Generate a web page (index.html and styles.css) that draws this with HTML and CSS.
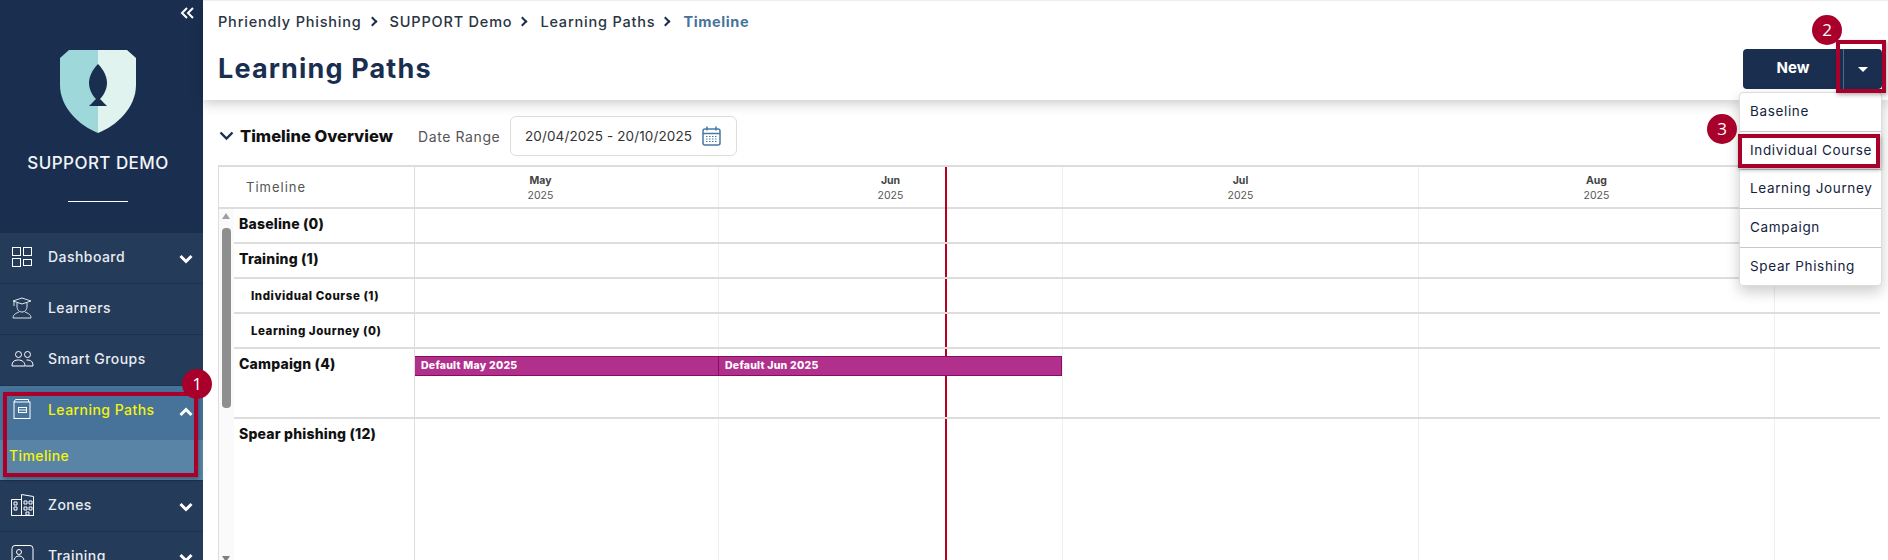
FILE: index.html
```html
<!DOCTYPE html>
<html lang="en">
<head>
<meta charset="utf-8">
<title>Learning Paths - Timeline</title>
<link rel="stylesheet" href="styles.css">
</head>
<body>
<div class="page">
  <aside class="sidebar">
    <div class="brand">
      <button class="collapse" aria-label="Collapse"><svg width="14" height="12" viewBox="0 0 14 12"><path d="M7 1 2 6l5 5M13 1 8 6l5 5" fill="none" stroke="#fff" stroke-width="2"/></svg></button>
      <svg class="shield" width="76" height="83" viewBox="0 0 76 83">
        <path d="M9 0H38V83C20 76 0 58 0 35V8Z" fill="#9fd8da"/>
        <path d="M38 0H67L76 8V35C76 58 56 76 38 83Z" fill="#e0f3ee"/>
        <path d="M38 14C32 20 29 27 29 33C29 40 33 46 36 49C33 52 31 54 29 56H47C45 54 43 52 40 49C43 46 47 40 47 33C47 27 44 20 38 14Z" fill="#1a2f50"/>
      </svg>
      <div class="brand-name">SUPPORT DEMO</div>
      <div class="brand-rule"></div>
    </div>
    <nav class="nav">
      <div class="nav-item">
        <svg class="nav-icon" width="20" height="20" viewBox="0 0 20 20" fill="none" stroke="#fff"><rect x=".5" y=".5" width="8" height="8"/><rect x="11.5" y=".5" width="8" height="8"/><rect x=".5" y="11.5" width="8" height="8"/><rect x="11.5" y="12.5" width="8" height="6"/></svg>
        <span class="nav-label">Dashboard</span>
        <svg class="nav-chev" width="14" height="10" viewBox="0 0 14 10"><path d="M1.500 2 7 7.500 12.500 2" fill="none" stroke="#fff" stroke-width="3"/></svg>
      </div>
      <div class="nav-item">
        <svg class="nav-icon" width="20" height="22" viewBox="0 0 20 22" fill="none" stroke="#dfe5ec"><path d="M1 4 10 1l9 3-9 3ZM5 6v3c0 4 2 6 5 6s5-2 5-6V6M2 4v5M1 21c0-4 4-5 6-6M19 21c0-4-4-5-6-6M1 21h18"/></svg>
        <span class="nav-label">Learners</span>
      </div>
      <div class="nav-item">
        <svg class="nav-icon wide" width="22" height="16" viewBox="0 0 22 16" fill="none" stroke="#fff"><circle cx="7" cy="3.500" r="3"/><circle cx="16" cy="3.500" r="3"/><path d="M.5 15c0-5 3-6 6.500-6s6.500 2 6.500 6ZM15 9c4 0 6.500 1 6.500 6H14"/></svg>
        <span class="nav-label">Smart Groups</span>
      </div>
      <div class="nav-group">
        <div class="nav-item active">
          <svg class="nav-icon" width="18" height="20" viewBox="0 0 18 20" fill="none" stroke="#fff" stroke-width="1"><path d="M2.500 .5H15.500V3"/><path d="M2.500 .5 1 3"/><rect x="1" y="3" width="16" height="16.500"/><rect x="5.500" y="8.500" width="8" height="5"/><path d="M5.500 11H13.500"/></svg>
          <span class="nav-label">Learning Paths</span>
          <svg class="nav-chev" width="14" height="10" viewBox="0 0 14 10"><path d="M1.500 8 7 2.500 12.500 8" fill="none" stroke="#fff" stroke-width="3"/></svg>
        </div>
        <div class="nav-sub">Timeline</div>
      </div>
      <div class="nav-item">
        <svg class="nav-icon wide" width="23" height="22" viewBox="0 0 23 22" fill="none" stroke="#fff"><path d="M.5 21.500V5.500h10V21.500ZM10.500 21.500V.5l12 2V21.500ZM.5 21.500h22M3 8h3v3H3ZM3 13h3v3H3ZM13 7h3v3h-3ZM18 7h3v3h-3ZM13 13h3v3h-3ZM18 13h3v3h-3ZM15 21v-3h3v3Z"/></svg>
        <span class="nav-label">Zones</span>
        <svg class="nav-chev" width="14" height="10" viewBox="0 0 14 10"><path d="M1.500 2 7 7.500 12.500 2" fill="none" stroke="#fff" stroke-width="3"/></svg>
      </div>
      <div class="nav-item">
        <svg class="nav-icon wide" width="23" height="22" viewBox="0 0 23 22" fill="none" stroke="#fff"><rect x="1" y=".5" width="21" height="18" rx="3"/><circle cx="8" cy="7" r="2.500"/><path d="M3 16c0-3 2-5 5-5s5 2 5 5"/></svg>
        <span class="nav-label">Training</span>
        <svg class="nav-chev" width="14" height="10" viewBox="0 0 14 10"><path d="M1.500 2 7 7.500 12.500 2" fill="none" stroke="#fff" stroke-width="3"/></svg>
      </div>
    </nav>
  </aside>

  <main class="main">
    <header class="topbar">
      <div class="crumbs">
        <span>Phriendly Phishing</span><i class="sep"></i>
        <span>SUPPORT Demo</span><i class="sep"></i>
        <span>Learning Paths</span><i class="sep"></i>
        <span class="crumb-current">Timeline</span>
      </div>
      <div class="title-row">
        <h1 class="title">Learning Paths</h1>
        <div class="split">
          <button class="btn-new">New</button>
          <button class="btn-caret" aria-label="More"><i class="caret"></i></button>
          <ul class="menu">
            <li>Baseline</li>
            <li>Individual Course</li>
            <li>Learning Journey</li>
            <li>Campaign</li>
            <li>Spear Phishing</li>
          </ul>
        </div>
      </div>
    </header>

    <section class="content">
      <div class="toolbar">
        <svg class="tool-chev" width="15" height="10" viewBox="0 0 15 10"><path d="M1.500 1.500 7.500 7.500 13.500 1.500" fill="none" stroke="#1a2f50" stroke-width="2.400"/></svg>
        <h2 class="tool-title">Timeline Overview</h2>
        <span class="range-label">Date Range</span>
        <div class="range-input">
          <span>20/04/2025 - 20/10/2025</span>
          <svg width="19" height="20" viewBox="0 0 19 20" fill="none" stroke="#4a7aa0"><rect x="1" y="3" width="17" height="16" rx="2" stroke-width="1.500"/><path d="M1 7.500h17M5 .5v4M14 .5v4" stroke-width="1.500"/><path d="M4 10.500h11M4 13h11M4 15.500h11" stroke-dasharray="1.500 1.500" stroke-width="1.200"/></svg>
        </div>
      </div>

      <div class="timeline">
        <div class="today"></div>
        <div class="tl-row tl-head">
          <div class="head-label">Timeline</div>
          <div class="month month-first"><b>May</b><span>2025</span></div>
          <div class="month"><b>Jun</b><span>2025</span></div>
          <div class="month"><b>Jul</b><span>2025</span></div>
          <div class="month"><b>Aug</b><span>2025</span></div>
          <div class="month"></div>
        </div>
        <div class="tl-body">
          <div class="scrollbar"><i class="arrow-up"></i><i class="thumb"></i><i class="arrow-down"></i></div>
          <div class="tl-rows">
            <div class="tl-row r35"><div class="label">Baseline (0)</div><div class="cell"></div><div class="cell"></div><div class="cell"></div><div class="cell"></div><div class="cell"></div></div>
            <div class="tl-row r35"><div class="label">Training (1)</div><div class="cell"></div><div class="cell"></div><div class="cell"></div><div class="cell"></div><div class="cell"></div></div>
            <div class="tl-row r35"><div class="label sub">Individual Course (1)</div><div class="cell"></div><div class="cell"></div><div class="cell"></div><div class="cell"></div><div class="cell"></div></div>
            <div class="tl-row r35"><div class="label sub">Learning Journey (0)</div><div class="cell"></div><div class="cell"></div><div class="cell"></div><div class="cell"></div><div class="cell"></div></div>
            <div class="tl-row r70"><div class="label">Campaign (4)</div><div class="cell"><div class="bar">Default May 2025</div></div><div class="cell"><div class="bar bar-end">Default Jun 2025</div></div><div class="cell"></div><div class="cell"></div><div class="cell"></div></div>
            <div class="tl-row r-last"><div class="label">Spear phishing (12)</div><div class="cell"></div><div class="cell"></div><div class="cell"></div><div class="cell"></div><div class="cell"></div></div>
          </div>
        </div>
      </div>
    </section>
  </main>

  <div class="mark mark-1"></div>
  <div class="mark mark-2"></div>
  <div class="mark mark-3"></div>
  <div class="badge badge-1">1</div>
  <div class="badge badge-2">2</div>
  <div class="badge badge-3">3</div>
</div>
</body>
</html>
```
FILE: styles.css
```css
* { box-sizing: border-box; }
html, body { margin: 0; padding: 0; height: 560px; overflow: hidden; background: #fff; }
body { font-family: Inter, "Noto Sans", sans-serif; color: #1a2f50; }
.page { position: relative; display: flex; width: 1888px; height: 560px; overflow: hidden; }

/* Sidebar */
.sidebar { flex: 0 0 203px; height: 560px; background: #1a2f50; overflow: hidden; }
.brand { position: relative; height: 233px; display: flex; flex-direction: column; align-items: center; padding: 50px 7px 0 0; }
.collapse { position: absolute; top: 7px; left: 180px; padding: 0; border: 0; background: none; line-height: 0; }
.shield { display: block; }
.brand-name { margin-top: 20px; font-size: 17px; line-height: 20px; font-weight: 500; color: #f2f4f7; letter-spacing: .45px; white-space: nowrap; }
.brand-rule { width: 60px; height: 1px; margin-top: 28px; background: #fff; }
.nav { background: #253b5a; }
.nav-item { position: relative; display: flex; align-items: center; height: 51px; padding: 0 0 3px 12px; border-bottom: 1px solid #1c3050; color: #e8ecf1; font-size: 14px; font-weight: 500; }
.nav-icon { flex: none; width: 20px; }
.nav-icon.wide { width: 23px; margin-left: -1px; }
.nav-label { position: absolute; left: 48px; letter-spacing: .45px; }
.nav-chev { position: absolute; left: 179px; top: 21px; }
.nav-group { background: #47739a; height: 95px; border-bottom: 1px solid #1c3050; }
.nav-item.active { height: 54px; border: 0; padding-bottom: 8px; color: #f4f40c; }
.nav-sub { height: 40px; padding: 7px 0 0 9px; background: #5a84a5; color: #f4f40c; font-size: 14px; font-weight: 500; letter-spacing: .4px; line-height: 18px; }

/* Top bar */
.main { flex: 1; min-width: 0; display: flex; flex-direction: column; }
.topbar { position: relative; z-index: 3; height: 100px; padding: 12px 6px 0 15px; border-top: 1px solid #eee; background: #fff; box-shadow: 0 3px 12px rgba(0,0,0,.22); }
.crumbs { display: flex; align-items: center; height: 16px; font-size: 14.500px; font-weight: 500; color: #2a3442; letter-spacing: .8px; white-space: nowrap; }
.sep { display: block; width: 7px; height: 7px; margin: 0 14px 0 7px; border-top: 2px solid #1a2f50; border-right: 2px solid #1a2f50; transform: rotate(45deg); }
.crumb-current { font-weight: 700; color: #47739a; letter-spacing: .6px; }
.title-row { display: flex; justify-content: space-between; align-items: flex-start; margin-top: 20px; }
.title { margin: 4px 0 0; font-size: 27px; line-height: 32px; font-weight: 700; color: #1a2f50; letter-spacing: 1.150px; }
.split { position: relative; display: flex; height: 40px; border-radius: 4px; background: #1a2f50; }
.btn-new { width: 100px; padding: 0 0 3px; border: 0; background: none; color: #fff; font: 700 15px Inter, sans-serif; }
.btn-caret { width: 39px; border: 0; border-left: 1px solid #56677f; background: none; display: flex; align-items: center; justify-content: center; padding: 0; }
.caret { border: 5px solid transparent; border-top-color: #fff; border-bottom: 0; }
.menu { position: absolute; top: 43px; right: 0; z-index: 5; width: 143px; margin: 0; padding: 0; list-style: none; background: #fff; border: 1px solid #ddd; border-radius: 4px; box-shadow: 0 6px 14px rgba(0,0,0,.2); }
.menu li { height: 38.700px; padding: 0 0 0 10px; line-height: 36px; font-size: 13.500px; font-weight: 400; color: #14233d; border-bottom: 1px solid #c8c8c8; white-space: nowrap; letter-spacing: .65px; }
.menu li:last-child { border: 0; height: 37px; }

/* Content */
.content { flex: 1; min-height: 0; padding: 16px 8px 0 15px; }
.toolbar { display: flex; align-items: center; height: 40px; }
.tool-chev { flex: none; margin-left: 1px; }
.tool-title { margin: 0 0 0 6px; width: 178px; font-size: 16.500px; font-weight: 800; color: #111; letter-spacing: 0; white-space: nowrap; }
.range-label { width: 92px; font-size: 14px; color: #555; letter-spacing: .6px; }
.range-input { display: flex; align-items: center; width: 227px; height: 40px; padding: 0 15px 0 14px; justify-content: space-between; border: 1px solid #ddd; border-radius: 6px; font-size: 13.500px; color: #333; letter-spacing: .12px; }
.timeline { position: relative; margin-top: 9px; height: 395px; border: solid #ddd; border-width: 2px 0 0 1px; overflow: hidden; }
.today { position: absolute; top: 0; bottom: 0; left: 726px; width: 2px; background: #b8001f; }
.tl-row { display: grid; grid-template-columns: 181px 304px 344px 356px 356px 106px; }
.tl-head { grid-template-columns: 196px 304px 344px 356px 356px 106px; height: 42px; border-bottom: 2px solid #ddd; }
.head-label { padding: 11px 0 0 27px; font-size: 13px; line-height: 18px; color: #555; letter-spacing: 1px; border-right: 1px solid #ddd; }
.month { display: flex; flex-direction: column; align-items: center; padding-top: 6px; border-right: 1px solid #eee; font-size: 10.500px; line-height: 15px; color: #444; }
.month-first { padding-right: 52px; }
.month b { font-weight: 700; }
.month span { color: #555; }
.tl-body { display: flex; height: 352px; }
.scrollbar { position: relative; flex: 0 0 15px; background: #fafafa; }
.thumb { position: absolute; top: 19px; left: 3px; width: 9px; height: 180px; border-radius: 4px; background: #8f8f8f; }
.arrow-up, .arrow-down { position: absolute; left: 3px; border: 6px solid transparent; border-left-width: 4.500px; border-right-width: 4.500px; }
.arrow-up { top: 4px; border-top: 0; border-bottom-color: #a0a0a0; }
.arrow-down { bottom: -1px; border-bottom: 0; border-top-color: #808080; }
.tl-rows { flex: 1; }
.tl-rows .tl-row { border-bottom: 2px solid #ddd; position: relative; z-index: 2; }
.tl-rows .tl-row.r-last { border-bottom: 0; }
.r35 { height: 35px; }
.r70 { height: 70px; }
.r-last { height: 142px; }
.label { padding: 5px 0 0 5px; font-size: 14px; line-height: 20px; font-weight: 800; color: #111; letter-spacing: .2px; border-right: 1px solid #ddd; }
.label.sub { padding: 7px 0 0 17px; font-size: 11.500px; letter-spacing: .55px; white-space: nowrap; }
.cell { position: relative; border-right: 1px solid #eee; }
.bar { height: 20px; margin: 7px -1px 0 0; padding-left: 6px; background: #b0308c; border: solid #8a0a68; border-width: 1px 0; border-right: 1px solid #8a0a68; font-size: 10.500px; line-height: 17px; font-weight: 800; color: #fff; letter-spacing: .25px; }
.bar-end { margin-right: 0; }

/* Annotations */
.mark { position: absolute; z-index: 8; border: 4px solid #a8002a; box-shadow: 1px 2px 4px rgba(0,0,0,.3); }
.mark-1 { left: 3px; top: 392px; width: 195px; height: 85px; }
.mark-2 { left: 1836px; top: 40px; width: 50px; height: 53px; }
.mark-3 { left: 1738px; top: 134px; width: 142px; height: 34px; }
.badge { position: absolute; z-index: 9; width: 30px; height: 30px; border-radius: 50%; background: #a8002a; color: #fff; font-family: "Open Sans", sans-serif; font-size: 17px; line-height: 30px; text-align: center; }
.badge-1 { left: 182px; top: 369px; }
.badge-2 { left: 1812px; top: 15px; }
.badge-3 { left: 1707px; top: 114px; }
```
